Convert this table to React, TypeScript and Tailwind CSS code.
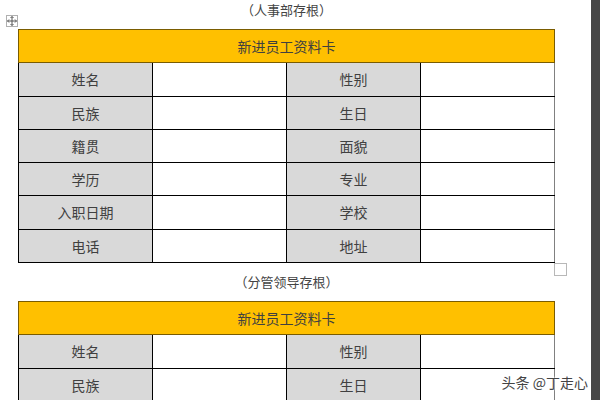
const rows: [string, string, string][] = [
  ['姓名', '性别', 'h-[34px]'],
  ['民族', '生日', 'h-[33px]'],
  ['籍贯', '面貌', 'h-[33px]'],
  ['学历', '专业', 'h-[33px]'],
  ['入职日期', '学校', 'h-[34px]'],
  ['电话', '地址', 'h-[33px]'],
]

const font = { fontFamily: '"Noto Sans CJK SC", "Noto Sans", sans-serif' }

function Card({ count }: { count: number }) {
  return (
    <table className="w-[537px] border-collapse text-[14px] text-[#404040]">
      <tbody>
        <tr className="h-[33px]">
          <td colSpan={4} className="border border-[#7a5c00] bg-[#ffc000] text-center">
            新进员工资料卡
          </td>
        </tr>
        {rows.slice(0, count).map(([a, b, h]) => (
          <tr key={a} className={h}>
            <td className="w-[134px] border border-black bg-[#d9d9d9] text-center">{a}</td>
            <td className="w-[134px] border border-black bg-white"></td>
            <td className="w-[134px] border border-black bg-[#d9d9d9] text-center">{b}</td>
            <td className="w-[134px] border border-black border-r-[#808080] bg-white"></td>
          </tr>
        ))}
      </tbody>
    </table>
  )
}

function MoveHandle() {
  return (
    <div className="absolute left-[6px] top-[15px] flex h-[12px] w-[12px] items-center justify-center border border-[#b0b0b0] bg-white">
      <svg width="10" height="10" viewBox="0 0 10 10" fill="none" stroke="#555" strokeWidth="1">
        <path d="M5 0.5v9M0.5 5h9" />
        <path d="M3.5 2L5 0.5 6.5 2M3.5 8L5 9.5 6.5 8M2 3.5L0.5 5 2 6.5M8 3.5L9.5 5 8 6.5" />
      </svg>
    </div>
  )
}

export default function App() {
  return (
    <div className="flex h-[400px] w-[600px] overflow-hidden bg-white" style={font}>
      <div className="relative w-[591px]">
        <MoveHandle />
        <div className="pl-[18px]">
          <div className="h-[29px] w-[537px] text-center text-[13px] leading-[20px] text-[#444]">
            （人事部存根）
          </div>
          <div className="relative">
            <Card count={6} />
            <div className="absolute left-[536px] top-[234px] h-[13px] w-[13px] border border-[#b8b8b8] bg-white" />
          </div>
          <div className="h-[38px] w-[537px] text-center text-[13px] leading-[38px] text-[#444]">
            （分管领导存根）
          </div>
          <Card count={2} />
        </div>
        <div
          className="absolute bottom-[7px] right-[3px] text-[14px] text-[#444]"
          style={{ textShadow: '0 0 2px #fff, 0 0 2px #fff' }}
        >
          头条 @丁走心
        </div>
      </div>
      <div className="w-[9px] bg-[#474747]" />
    </div>
  )
}
